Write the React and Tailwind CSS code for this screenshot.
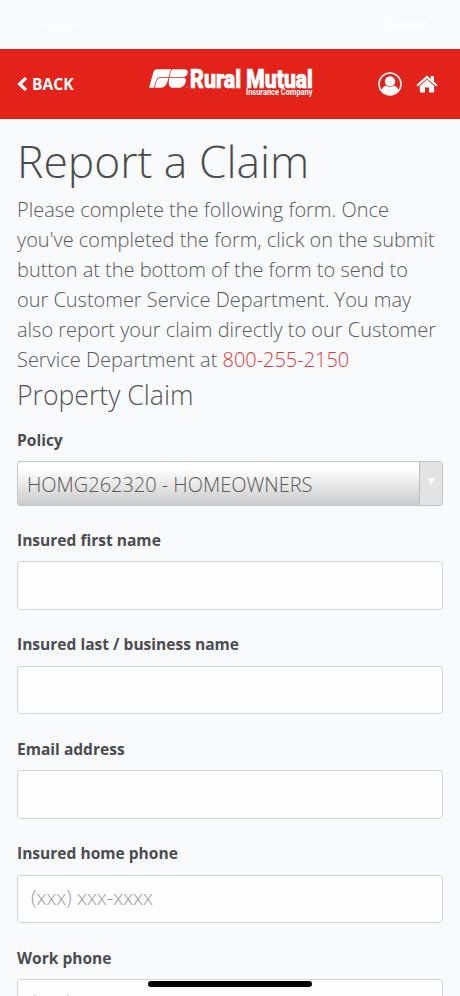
const FIELDS = [
  { label: "Insured first name" },
  { label: "Insured last / business name" },
  { label: "Email address" },
  { label: "Insured home phone", placeholder: "(xxx) xxx-xxxx" },
  { label: "Work phone", placeholder: "(xxx) xxx-xxxx" },
];

function StatusBar() {
  return (
    <div className="flex h-[49px] items-center justify-between px-[30px]">
      <div className="ml-[12px] h-[10px] w-[36px] rounded-full bg-white/40 blur-[1px]" />
      <div className="h-[8px] w-[40px] rounded-full bg-white/50 blur-[1px]" />
    </div>
  );
}

function Logo() {
  return (
    <svg className="h-[44px] w-[168px]" viewBox="148 60 168 44" fill="white" aria-label="Rural Mutual">
      <path d="M157 69.2H171.2C170.2 71 169.4 74 168.8 77H162C158 77 156.9 78.4 156 81L153.6 87.8H149L153.3 72.4C153.9 70.2 154.8 69.2 157 69.2Z" />
      <path d="M161.8 77.7H168.6L167.2 82.2C165.6 86.6 163 87.8 159.8 87.8H154.4L156.7 81C157.4 78.7 158.7 77.7 161.8 77.7Z" />
      <path d="M172.2 69.2H183.4C187.4 69.2 188.5 71.2 187.5 73.8C186.8 76 185.4 77 183 77H169.6C170 73.6 170.8 71 172.2 69.2Z" />
      <path d="M169.4 77.7H182.4C185.6 77.7 186.5 79.2 185.7 82C184.7 85.8 182.4 87.8 178.6 87.8H171.4C168.2 86 168.4 81.6 169.4 77.7Z" />
      <circle cx="186.8" cy="87" r="0.6" />
      <g stroke="white" strokeWidth="0.7">
        <text x="190" y="87.6" textLength="51" lengthAdjust="spacingAndGlyphs" className="font-['Roboto',sans-serif] text-[25.5px] font-black">
          Rural
        </text>
        <text x="246.3" y="87.6" textLength="66.5" lengthAdjust="spacingAndGlyphs" className="font-['Roboto',sans-serif] text-[25.5px] font-black">
          Mutual
        </text>
      </g>
      <text x="246" y="95.2" textLength="66.5" lengthAdjust="spacingAndGlyphs" className="font-['Roboto',sans-serif] text-[9px] font-bold">
        Insurance Company
      </text>
    </svg>
  );
}

function UserIcon() {
  return (
    <svg className="h-[24px] w-[24px]" viewBox="0 0 24 24" fill="white">
      <circle cx="12" cy="12" r="11" fill="none" stroke="white" strokeWidth="1.5" />
      <circle cx="12" cy="9.4" r="5.2" />
      <path d="M3.6 18.6C4.2 15.8 5.8 14.2 8 13.6C10 15.6 14 15.6 16 13.6C18.2 14.2 19.8 15.8 20.4 18.6C18.4 21.4 15.5 23 12 23C8.5 23 5.6 21.4 3.6 18.6Z" />
    </svg>
  );
}

function HomeIcon() {
  return (
    <svg className="h-[18px] w-[22px]" viewBox="0 0 22 18" fill="white">
      <path d="M11 0.6L14.8 4V1H18V6.8L21.6 10L20.3 11.4L11 3.4L1.7 11.4L0.4 10Z" />
      <path d="M11 4.6L18.2 11V16.4Q18.2 17.5 17.1 17.5H13V12.4H9V17.5H4.9Q3.8 17.5 3.8 16.4V11Z" />
    </svg>
  );
}

function Header() {
  return (
    <header className="grid h-[70px] grid-cols-[132px_1fr_100px] items-center bg-[#e32219] pr-[22px] pl-[16px]">
      <button className="flex items-center gap-[4px] text-[15.6px] font-bold text-white">
        <svg className="h-[14px] w-[12px]" viewBox="0 0 12 14" fill="none" stroke="white" strokeWidth="3.2">
          <path d="M10 1L3.6 7L10 13" />
        </svg>
        <span className="pt-[1px]">BACK</span>
      </button>
      <div className="pb-[4px]">
        <Logo />
      </div>
      <div className="flex items-center justify-end gap-[14px]">
        <UserIcon />
        <HomeIcon />
      </div>
    </header>
  );
}

function Field({ label, placeholder }) {
  return (
    <label className="mb-[22.5px] block">
      <span className="block h-[33.5px] text-[15.55px] leading-[24px] font-bold">{label}</span>
      <input
        className="block h-[48.5px] w-full rounded-[3px] border border-[#d3d5d8] bg-[#fefefe] px-[13px] pb-[2px] text-[20px] font-light outline-none placeholder:text-[#9b9c9e]"
        placeholder={placeholder}
      />
    </label>
  );
}

export default function App() {
  return (
    <div className="relative h-[996px] w-[460px] overflow-hidden bg-[#f9fafc] font-['Open_Sans',sans-serif] text-[#4b4c4e]">
      <StatusBar />
      <Header />
      <main className="px-[17px] pt-[11px]">
        <h1 className="h-[65px] text-[44.4px] leading-[63px] font-light whitespace-nowrap">Report a Claim</h1>
        <p className="text-[19.97px] leading-[30px] font-light whitespace-nowrap text-[#58595b]">
          Please complete the following form. Once
          <br />
          you've completed the form, click on the submit
          <br />
          button at the bottom of the form to send to
          <br />
          our Customer Service Department. You may
          <br />
          also report your claim directly to our Customer
          <br />
          Service Department at <a className="text-[#e23636]">800-255-2150</a>
        </p>
        <h2 className="text-[26.6px] leading-[40px] font-light text-[#535456]">Property Claim</h2>
        <div className="mt-[13px]">
          <span className="block h-[33px] text-[15.55px] leading-[24px] font-bold">Policy</span>
          <div className="flex h-[44.5px] overflow-hidden rounded-[3px] border border-[#c4c5c7] bg-linear-to-b from-white from-15% to-[#cbcbcb]">
            <div className="flex-1 pl-[9px] text-[19.97px] leading-[45px] font-light text-[#58595b]">HOMG262320 - HOMEOWNERS</div>
            <div className="flex w-[23px] justify-center border-l border-[#bcbcbc] bg-[#e3e3e3] pt-[16px] pr-[1px]">
              <svg className="h-[7px] w-[8px]" viewBox="0 0 8 7" fill="white">
                <path d="M0 0H8L4 7Z" />
              </svg>
            </div>
          </div>
        </div>
        <div className="mt-[22px]">
          {FIELDS.map((field) => (
            <Field key={field.label} {...field} />
          ))}
        </div>
      </main>
      <div className="absolute bottom-[9px] left-[148px] h-[6px] w-[164px] rounded-full bg-black" />
    </div>
  );
}
